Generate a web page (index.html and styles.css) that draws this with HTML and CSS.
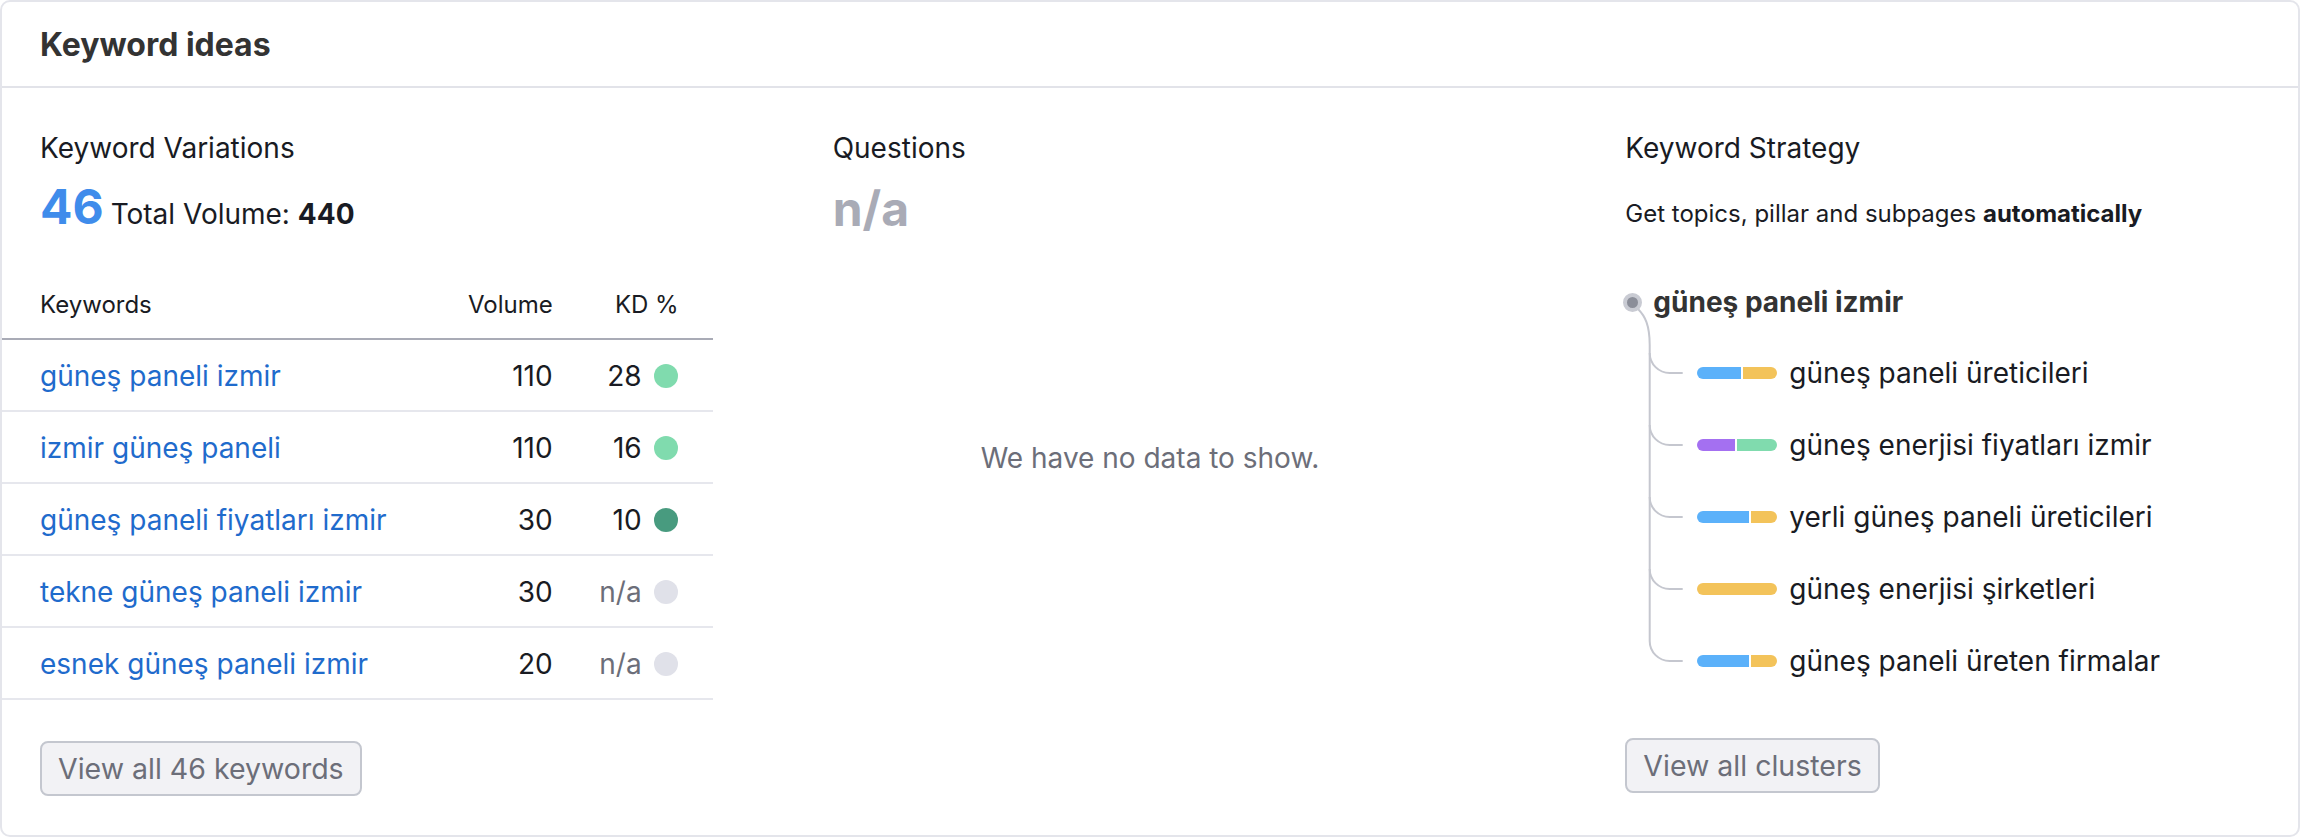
FILE: index.html
```html
<!DOCTYPE html>
<html lang="en">
<head>
<meta charset="utf-8">
<title>Keyword ideas</title>
<link rel="stylesheet" href="styles.css">
</head>
<body>
<div class="card">
  <div class="card-header">
    <h2 class="card-title">Keyword ideas</h2>
  </div>
  <div class="card-body">
    <section class="col">
      <h3 class="col-title">Keyword Variations</h3>
      <div class="total">
        <span class="total-num">46</span>
        <span class="total-label">Total Volume: <b>440</b></span>
      </div>
      <div class="kw-table">
        <div class="kw-row kw-head">
          <div class="c-kw">Keywords</div>
          <div class="c-vol">Volume</div>
          <div class="c-kd">KD %</div>
        </div>
        <div class="kw-row">
          <div class="c-kw"><a class="kw-link" href="#">güneş paneli izmir</a></div>
          <div class="c-vol">110</div>
          <div class="c-kd"><span>28</span><span class="dot kd-easy"></span></div>
        </div>
        <div class="kw-row">
          <div class="c-kw"><a class="kw-link" href="#">izmir güneş paneli</a></div>
          <div class="c-vol">110</div>
          <div class="c-kd"><span>16</span><span class="dot kd-easy"></span></div>
        </div>
        <div class="kw-row">
          <div class="c-kw"><a class="kw-link" href="#">güneş paneli fiyatları izmir</a></div>
          <div class="c-vol">30</div>
          <div class="c-kd"><span>10</span><span class="dot kd-veryeasy"></span></div>
        </div>
        <div class="kw-row">
          <div class="c-kw"><a class="kw-link" href="#">tekne güneş paneli izmir</a></div>
          <div class="c-vol">30</div>
          <div class="c-kd"><span class="na">n/a</span><span class="dot kd-na"></span></div>
        </div>
        <div class="kw-row">
          <div class="c-kw"><a class="kw-link" href="#">esnek güneş paneli izmir</a></div>
          <div class="c-vol">20</div>
          <div class="c-kd"><span class="na">n/a</span><span class="dot kd-na"></span></div>
        </div>
      </div>
      <button class="btn btn-kw">View all 46 keywords</button>
    </section>

    <section class="col">
      <h3 class="col-title">Questions</h3>
      <div class="na-big">n/a</div>
      <div class="empty">We have no data to show.</div>
    </section>

    <section class="col">
      <h3 class="col-title">Keyword Strategy</h3>
      <p class="strategy-desc">Get topics, pillar and subpages <b>automatically</b></p>
      <div class="tree">
        <svg class="tree-lines" width="60" height="400" viewBox="0 0 60 400" aria-hidden="true">
          <g fill="none" stroke="#c5c7cf" stroke-width="2">
            <path d="M13 25 C20 32 24.7 41 24.7 61 V357"/>
            <path d="M24.7 69 A20 20 0 0 0 44.7 89 H57.7"/>
            <path d="M24.7 141 A20 20 0 0 0 44.7 161 H57.7"/>
            <path d="M24.7 213 A20 20 0 0 0 44.7 233 H57.7"/>
            <path d="M24.7 285 A20 20 0 0 0 44.7 305 H57.7"/>
            <path d="M24.7 357 A20 20 0 0 0 44.7 377 H57.7"/>
          </g>
        </svg>
        <div class="tree-root">
          <span class="root-dot"></span>
          <span class="root-text">güneş paneli izmir</span>
        </div>
        <ul class="children">
          <li class="child">
            <span class="bar"><span class="seg seg-info" style="width:44px"></span><span class="seg seg-comm" style="width:34px"></span></span>
            <span>güneş paneli üreticileri</span>
          </li>
          <li class="child">
            <span class="bar"><span class="seg seg-nav" style="width:38px"></span><span class="seg seg-trans" style="width:40px"></span></span>
            <span>güneş enerjisi fiyatları izmir</span>
          </li>
          <li class="child">
            <span class="bar"><span class="seg seg-info" style="width:52px"></span><span class="seg seg-comm" style="width:26px"></span></span>
            <span>yerli güneş paneli üreticileri</span>
          </li>
          <li class="child">
            <span class="bar"><span class="seg seg-comm" style="width:80px"></span></span>
            <span>güneş enerjisi şirketleri</span>
          </li>
          <li class="child">
            <span class="bar"><span class="seg seg-info" style="width:52px"></span><span class="seg seg-comm" style="width:26px"></span></span>
            <span>güneş paneli üreten firmalar</span>
          </li>
        </ul>
      </div>
      <button class="btn btn-clusters">View all clusters</button>
    </section>
  </div>
</div>
</body>
</html>
```

FILE: styles.css
```css
* {
  box-sizing: border-box;
}

body {
  margin: 0;
  background: #ffffff;
  color: #191b23;
  font-family: Inter, "Noto Sans", sans-serif;
}

.card {
  width: 2300px;
  height: 837px;
  border: 2px solid #e4e5eb;
  border-radius: 10px;
  background: #ffffff;
  overflow: hidden;
}

.card-header {
  height: 86px;
  display: flex;
  align-items: center;
  padding-left: 38px;
  border-bottom: 2px solid #e2e3e9;
}

.card-title {
  margin: 0;
  font-size: 32px;
  font-weight: 700;
  color: #333333;
}

.card-body {
  display: grid;
  grid-template-columns: repeat(3, 1fr);
  column-gap: 158px;
  padding: 42px 38px 0;
}

.col {
  display: flex;
  flex-direction: column;
  align-items: flex-start;
  min-width: 0;
}

.col-title {
  margin: 0;
  font-size: 28px;
  line-height: 36px;
  font-weight: 400;
  color: #191b23;
}

/* Keyword variations */
.total {
  display: flex;
  align-items: baseline;
  gap: 7px;
  margin-top: 13px;
}

.total-num {
  font-size: 48px;
  line-height: 56px;
  font-weight: 700;
  color: #3f8ceb;
}

.total-label {
  font-size: 28px;
  line-height: 36px;
}

.kw-table {
  align-self: stretch;
  margin: 54px -38px 0;
}

.kw-row {
  display: flex;
  align-items: center;
  height: 72px;
  padding-top: 1px;
  border-bottom: 2px solid #e6e7ed;
  font-size: 28px;
  line-height: 36px;
}

.kw-head {
  height: auto;
  padding-top: 0;
  padding-bottom: 17px;
  border-bottom-color: #a9abb6;
  font-size: 24px;
  line-height: 32px;
}

.c-kw {
  flex: 1;
  min-width: 0;
  padding-left: 38px;
  white-space: nowrap;
}

.c-vol {
  width: 100px;
  text-align: right;
}

.c-kd {
  width: 160px;
  padding-right: 35px;
  display: flex;
  justify-content: flex-end;
  align-items: center;
  gap: 12px;
}

.kw-head .c-kd {
  padding-right: 34px;
}

.kw-link {
  color: #1f6bcc;
  text-decoration: none;
}

.na {
  color: #6c6e79;
}

.dot {
  width: 24px;
  height: 24px;
  border-radius: 50%;
  flex: none;
}

.kd-easy {
  background: #80dbae;
}

.kd-veryeasy {
  background: #489b7f;
}

.kd-na {
  background: #e0e1e9;
}

.btn {
  height: 55px;
  padding: 0 16px;
  border: 2px solid #c4c7cf;
  border-radius: 8px;
  background: #f2f2f5;
  color: #6c6e79;
  font-family: Inter, "Noto Sans", sans-serif;
  font-size: 28.5px;
  line-height: 36px;
  cursor: pointer;
}

.btn-kw {
  margin-top: 41px;
}

/* Questions */
.na-big {
  margin-top: 15px;
  font-size: 48px;
  line-height: 56px;
  font-weight: 700;
  color: #a9abb6;
}

.empty {
  align-self: stretch;
  height: 441px;
  display: flex;
  align-items: center;
  justify-content: center;
  font-size: 28px;
  line-height: 36px;
  color: #6c6e79;
}

/* Keyword strategy */
.strategy-desc {
  margin: 32px 0 0;
  font-size: 24px;
  line-height: 32px;
}

.tree {
  position: relative;
  align-self: stretch;
  margin-top: 54px;
}

.tree-lines {
  position: absolute;
  left: 0;
  top: 0;
  overflow: visible;
}

.tree-root {
  position: relative;
  display: flex;
  align-items: center;
  gap: 11px;
  height: 36px;
}

.root-dot {
  width: 19px;
  height: 19px;
  margin-left: -2px;
  border-radius: 50%;
  border: 4px solid #c9cbd3;
  background: #8b8e99;
  flex: none;
}

.root-text {
  font-size: 28px;
  line-height: 36px;
  font-weight: 700;
  color: #333333;
}

.children {
  list-style: none;
  margin: 17px 0 0;
  padding: 0;
}

.child {
  position: relative;
  display: flex;
  align-items: center;
  gap: 12px;
  height: 72px;
  padding-left: 72px;
  font-size: 28px;
  line-height: 36px;
  white-space: nowrap;
}

.bar {
  display: flex;
  gap: 2px;
  width: 80px;
  height: 12px;
  border-radius: 6px;
  overflow: hidden;
  flex: none;
}

.seg {
  height: 100%;
  flex: none;
}

.seg-info {
  background: #5bb1fa;
}

.seg-comm {
  background: #f3c35a;
}

.seg-nav {
  background: #a470f1;
}

.seg-trans {
  background: #80dbae;
}

.btn-clusters {
  margin-top: 41px;
}
```
